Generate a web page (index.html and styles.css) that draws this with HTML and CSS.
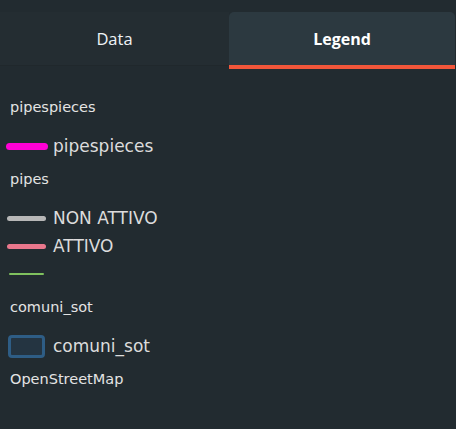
FILE: index.html
```html
<!DOCTYPE html>
<html>
<head>
<meta charset="utf-8">
<link rel="stylesheet" href="styles.css">
</head>
<body>
<div class="panel">
  <div class="tabs">
    <div class="tab">Data</div>
    <div class="tab tab-active">Legend</div>
  </div>
  <div class="legend">
    <div class="group">
      <div class="row label">pipespieces</div>
      <div class="items">
        <div class="row item"><span class="sym"><span class="line line-magenta"></span></span><span class="txt">pipespieces</span></div>
      </div>
    </div>
    <div class="group">
      <div class="row label">pipes</div>
      <div class="items">
        <div class="row item"><span class="sym"><span class="line line-grey"></span></span><span class="txt">NON ATTIVO</span></div>
        <div class="row item"><span class="sym"><span class="line line-pink"></span></span><span class="txt">ATTIVO</span></div>
        <div class="row item"><span class="sym"><span class="line line-green"></span></span><span class="txt"></span></div>
      </div>
    </div>
    <div class="group">
      <div class="row label">comuni_sot</div>
      <div class="items">
        <div class="row item"><span class="sym"><span class="box"></span></span><span class="txt">comuni_sot</span></div>
      </div>
    </div>
    <div class="group">
      <div class="row label">OpenStreetMap</div>
    </div>
  </div>
</div>
</body>
</html>
```

FILE: styles.css
```css
html, body {
  margin: 0;
  padding: 0;
  background: #222b30;
}
.panel {
  width: 456px;
  height: 429px;
  background: #222b30;
  overflow: hidden;
}
.tabs {
  display: flex;
  margin-top: 12px;
  height: 57px;
}
.tab {
  flex: 0 0 229px;
  display: flex;
  align-items: center;
  justify-content: center;
  height: 53px;
  background: #242d32;
  border-bottom: 1px solid #20282c;
  color: #eef3f6;
  font-family: "Open Sans", sans-serif;
  font-size: 16.5px;
}
.tab-active {
  flex: 0 0 226px;
  background: #2c3940;
  border-radius: 5px 5px 0 0;
  border-bottom: 4px solid #f2563a;
  color: #ffffff;
  font-size: 16px;
  font-weight: 700;
}
.legend {
  padding-top: 24px;
  font-family: "DejaVu Sans", sans-serif;
}
.group + .group {
  margin-top: 5px;
}
.row {
  height: 28px;
  display: flex;
  align-items: center;
}
.label {
  padding-left: 10px;
  font-size: 14.5px;
  color: #e4e4e4;
}
.items {
  margin-top: 11px;
}
.item {
  padding-left: 5px;
  gap: 5px;
}
.sym {
  width: 43px;
  display: flex;
  align-items: center;
  justify-content: center;
}
.txt {
  font-size: 17px;
  color: #dcdcdc;
}
.line {
  display: block;
  border-radius: 4px;
}
.line-magenta {
  width: 42px;
  height: 7px;
  background: #ff00d4;
}
.line-grey {
  width: 39px;
  height: 5px;
  background: #b7b7b7;
}
.line-pink {
  width: 39px;
  height: 5px;
  background: #e9778c;
}
.line-green {
  width: 35px;
  height: 2px;
  border-radius: 1px;
  background: #7fc15e;
}
.box {
  display: block;
  width: 31px;
  height: 17px;
  border: 3px solid #2e5d85;
  border-radius: 4px;
  background: #243441;
}
```
